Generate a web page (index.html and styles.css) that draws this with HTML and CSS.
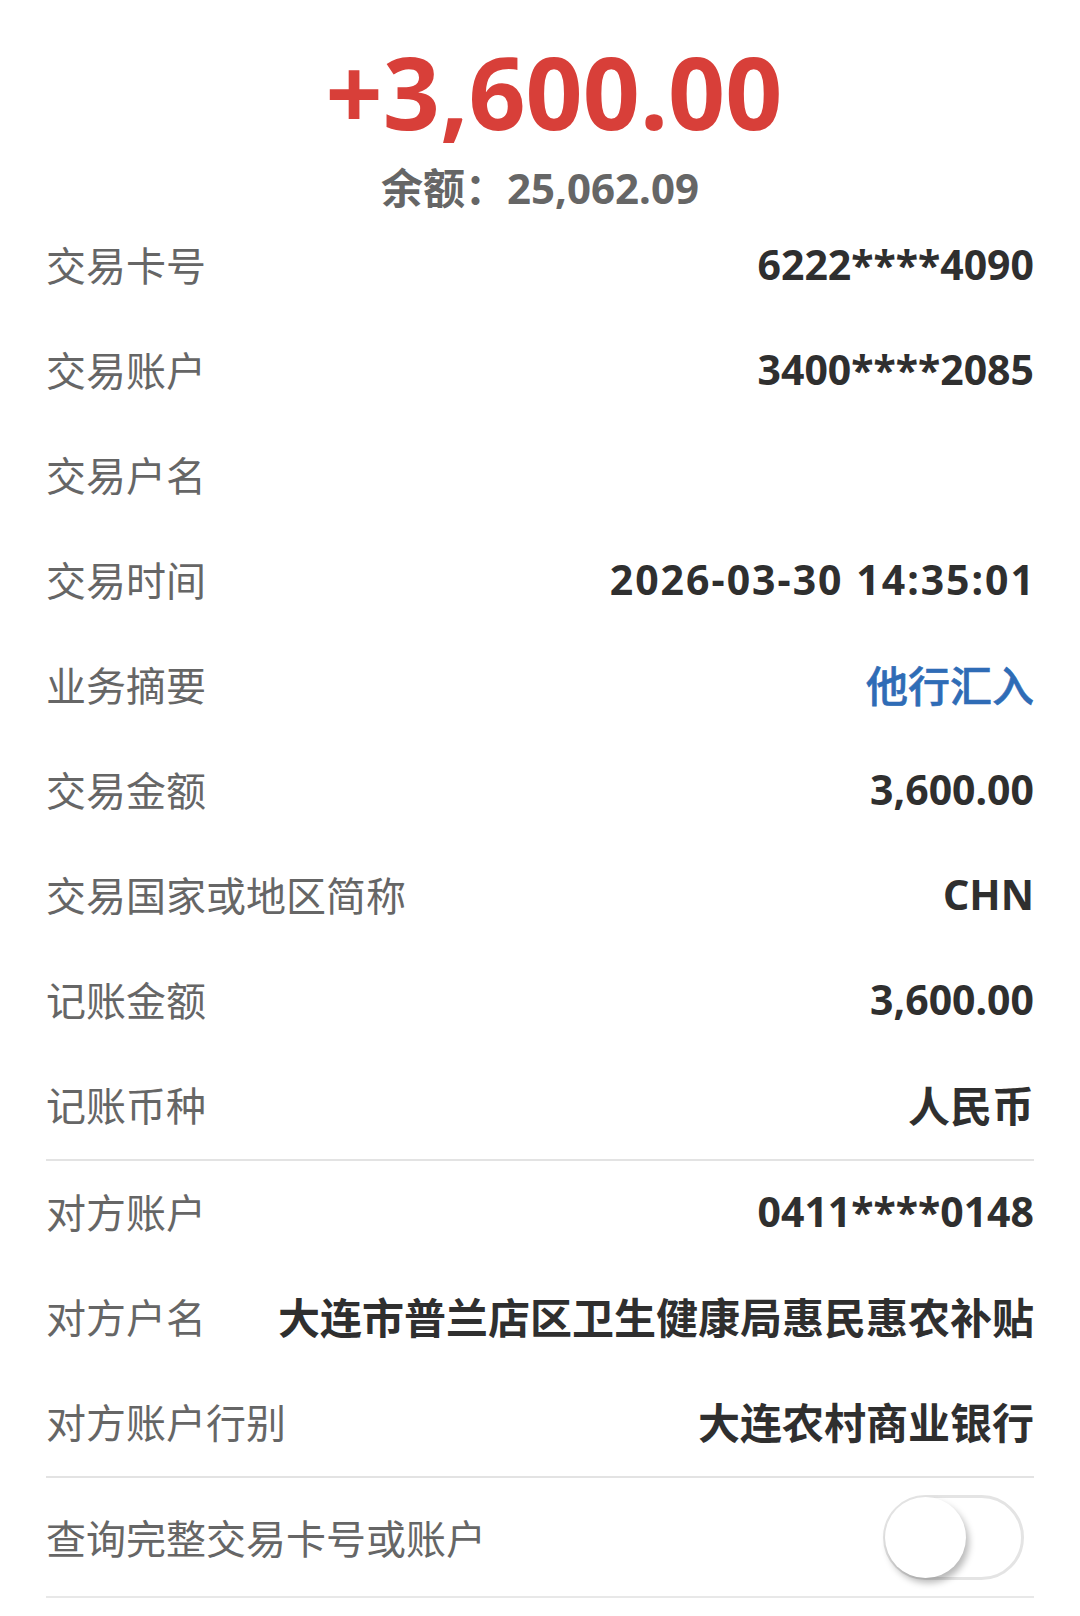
FILE: index.html
```html
<!DOCTYPE html>
<html lang="zh-CN">
<head>
    <meta charset="UTF-8">
    <meta name="viewport" content="width=device-width, initial-scale=1.0">
    <title>交易详情</title>
    <link rel="stylesheet" href="styles.css">
</head>
<body>
    <!-- 金额与余额 -->
    <header class="summary">
        <div class="amount">+3,600.00</div>
        <div class="balance">余额：25,062.09</div>
    </header>

    <main class="details">
        <!-- 交易信息 -->
        <section class="group">
            <div class="row"><span class="label">交易卡号</span><span class="value">6222****4090</span></div>
            <div class="row"><span class="label">交易账户</span><span class="value">3400****2085</span></div>
            <div class="row"><span class="label">交易户名</span><span class="value"></span></div>
            <div class="row"><span class="label">交易时间</span><span class="value date">2026-03-30 14:35:01</span></div>
            <div class="row"><span class="label">业务摘要</span><span class="value link">他行汇入</span></div>
            <div class="row"><span class="label">交易金额</span><span class="value">3,600.00</span></div>
            <div class="row"><span class="label">交易国家或地区简称</span><span class="value">CHN</span></div>
            <div class="row"><span class="label">记账金额</span><span class="value">3,600.00</span></div>
            <div class="row"><span class="label">记账币种</span><span class="value cn">人民币</span></div>
        </section>

        <!-- 对方信息 -->
        <section class="group">
            <div class="row"><span class="label">对方账户</span><span class="value">0411****0148</span></div>
            <div class="row"><span class="label">对方户名</span><span class="value cn">大连市普兰店区卫生健康局惠民惠农补贴</span></div>
            <div class="row"><span class="label">对方账户行别</span><span class="value cn">大连农村商业银行</span></div>
        </section>

        <!-- 查询开关 -->
        <section class="group last">
            <div class="row switch-row">
                <span class="label">查询完整交易卡号或账户</span>
                <span class="switch"><span class="knob"></span></span>
            </div>
        </section>
    </main>
</body>
</html>
```

FILE: styles.css
```css
body {
    margin: 0;
    padding: 0;
    background-color: #fff;
    font-family: "Noto Sans CJK SC", sans-serif;
    color: #333;
}
.summary {
    text-align: center;
    height: 214px;
    padding-top: 35px;
    box-sizing: border-box;
}
.amount {
    font-family: "Noto Sans", "Noto Sans CJK SC", sans-serif;
    font-size: 100px;
    font-weight: 700;
    line-height: 112px;
    padding-left: 28px;
    color: #d83f39;
}
.balance {
    font-family: "Noto Sans", "Noto Sans CJK SC", sans-serif;
    font-size: 42px;
    font-weight: 700;
    line-height: 56px;
    margin-top: 13px;
    color: #666;
}
.details {
    padding: 0 46px;
}
.group {
    border-bottom: 2px solid #e3e3e3;
}
.group.last {
    border-bottom: 2px solid #e8e8e8;
}
.row {
    display: flex;
    justify-content: space-between;
    align-items: center;
    height: 105px;
    padding-bottom: 6px;
    box-sizing: border-box;
}
.label {
    font-size: 40px;
    color: #666;
    white-space: nowrap;
}
.value {
    font-family: "Noto Sans", "Noto Sans CJK SC", sans-serif;
    font-size: 41px;
    font-weight: 700;
    color: #2f2f2f;
    white-space: nowrap;
}
.value.cn {
    font-size: 42px;
}
.value.date {
    letter-spacing: 2px;
    margin-right: -2px;
}
.value.link {
    font-family: "Noto Sans CJK SC", sans-serif;
    font-size: 42px;
    font-weight: 500;
    -webkit-text-stroke: 0.6px #2f6cb6;
    color: #2f6cb6;
}
.switch-row {
    height: 118px;
    padding-bottom: 0;
}
.switch {
    width: 141px;
    height: 85px;
    margin-right: 10px;
    border: 3px solid #e4e4e4;
    border-radius: 45px;
    box-sizing: border-box;
    display: flex;
    align-items: center;
}
.knob {
    width: 81px;
    height: 81px;
    border-radius: 50%;
    background-color: #fff;
    margin-left: -1px;
    box-shadow: 3px 5px 7px rgba(0, 0, 0, 0.28);
}
```
